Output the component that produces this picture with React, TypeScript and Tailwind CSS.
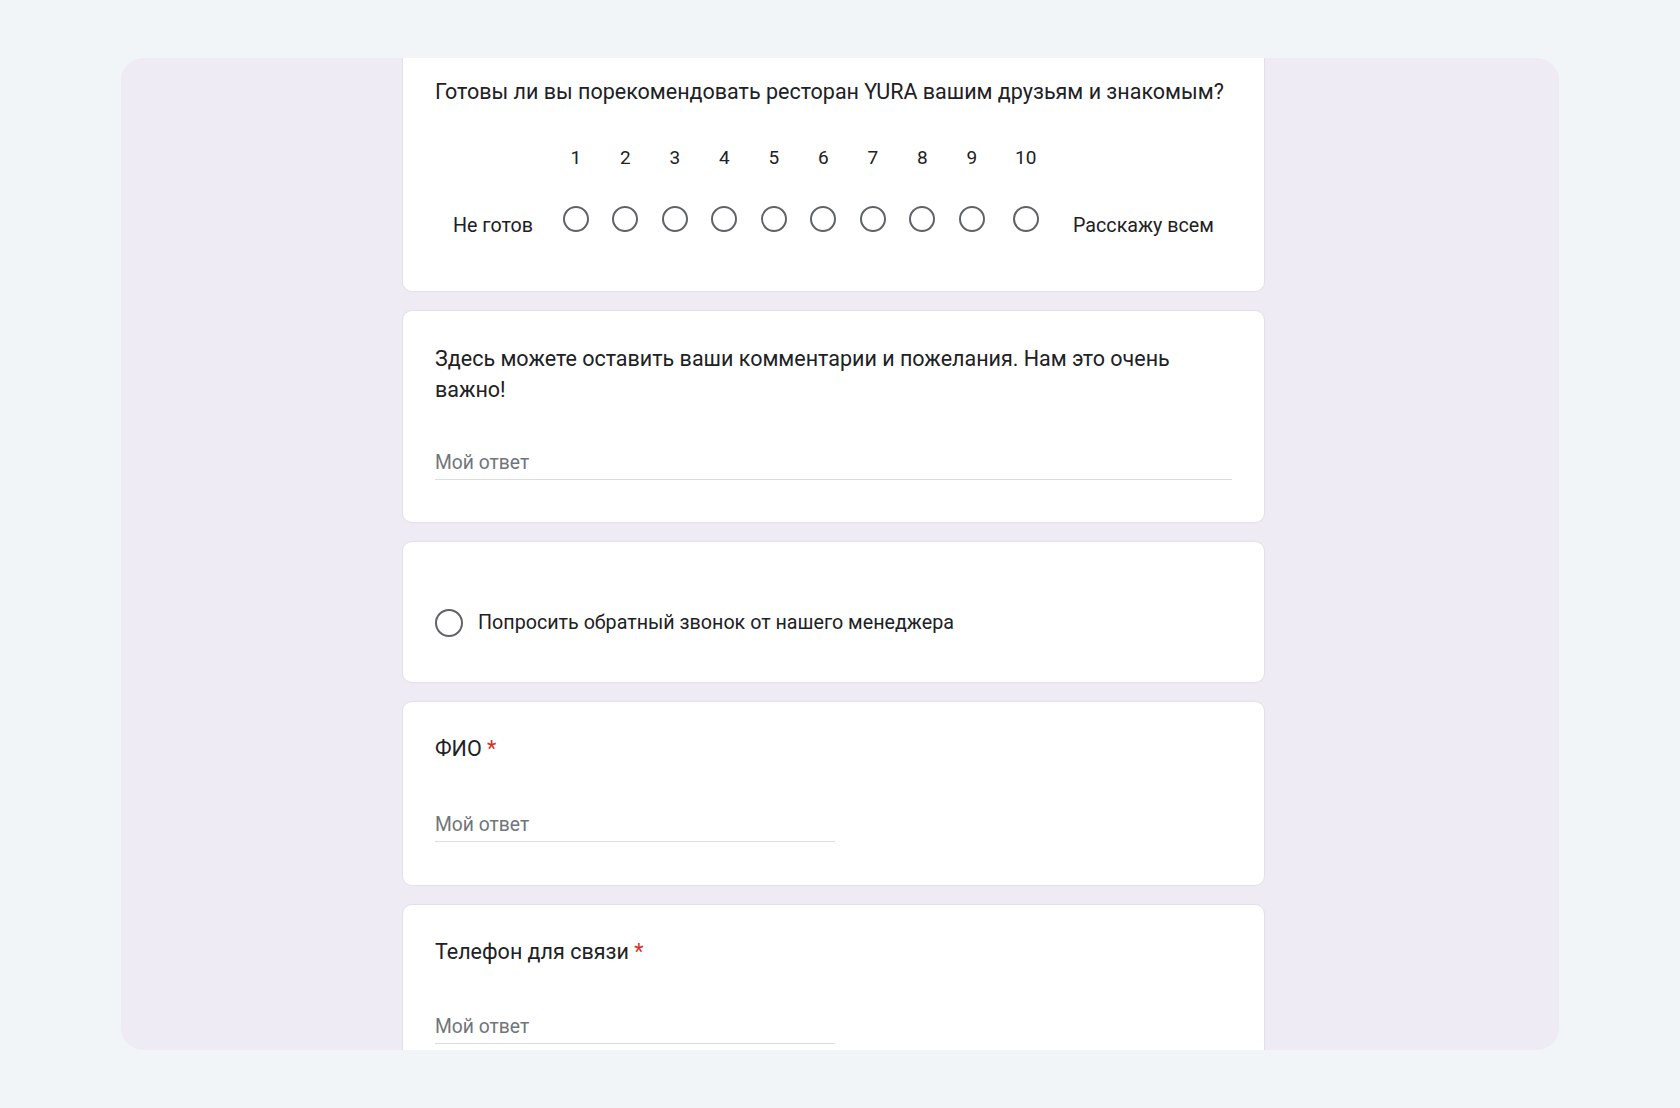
import React from "react";

const scale = [1, 2, 3, 4, 5, 6, 7, 8, 9, 10];

function Radio({ size = 26 }: { size?: number }) {
  return (
    <span
      className={`block rounded-full border-2 border-[#5f6368] ${
        size === 26 ? "w-[26px] h-[26px]" : "w-[28px] h-[28px]"
      }`}
    />
  );
}

function Card({ children, className = "" }: { children: React.ReactNode; className?: string }) {
  return (
    <div className={`bg-white rounded-[10px] border border-[#e2e0ea] px-[32px] ${className}`}>
      {children}
    </div>
  );
}

function Answer({ wide }: { wide?: boolean }) {
  return (
    <div className={`${wide ? "w-full" : "w-[400px]"} border-b border-[#dadce0] pb-[4px]`}>
      <span className="block leading-[24px] text-[19.3px] text-[#70757a]">Мой ответ</span>
    </div>
  );
}

export default function App() {
  return (
    <div className="h-screen bg-[#f2f5f8] pt-[58px] px-[121px] font-['Roboto','Liberation_Sans',sans-serif] text-[#202124]">
      <div className="h-[992px] rounded-[22px] bg-[#eeebf5] overflow-hidden flex">
        <div className="w-[863px] ml-[281px] -mt-[28px] flex flex-col gap-[18px]">
          {/* Linear scale question */}
          <Card className="pt-[46px] pb-[53px]">
            <p className="text-[21.5px] leading-[30px]">
              Готовы ли вы порекомендовать ресторан YURA вашим друзьям и знакомым?
            </p>
            <div className="flex items-start mt-[39px]">
              <div className="w-[116px] pt-[68px] text-center text-[19.7px] leading-[24px]">Не готов</div>
              {scale.map((n) => (
                <div
                  key={n}
                  className={`flex flex-col items-center ${n === 10 ? "w-[58.5px]" : "w-[49.5px]"}`}
                >
                  <span className="text-[19px] leading-[24px]">{n}</span>
                  <div className="mt-[36px]">
                    <Radio />
                  </div>
                </div>
              ))}
              <div className="pl-[18px] pt-[68px] text-[19.7px] leading-[24px]">Расскажу всем</div>
            </div>
          </Card>

          {/* Comments */}
          <Card className="pt-[32px] pb-[42px]">
            <p className="text-[21.5px] leading-[31px]">
              Здесь можете оставить ваши комментарии и пожелания. Нам это очень
              <br />
              важно!
            </p>
            <div className="mt-[46px]">
              <Answer wide />
            </div>
          </Card>

          {/* Callback */}
          <Card className="pt-[67px] pb-[45px]">
            <label className="flex items-center gap-[15px]">
              <Radio size={28} />
              <span className="text-[19.7px] leading-[24px]">
                Попросить обратный звонок от нашего менеджера
              </span>
            </label>
          </Card>

          {/* Name */}
          <Card className="pt-[32px] pb-[43px]">
            <p className="text-[21.5px] leading-[30px]">
              ФИО <span className="text-[#d93025]">*</span>
            </p>
            <div className="mt-[49px]">
              <Answer />
            </div>
          </Card>

          {/* Phone */}
          <Card className="pt-[32px] pb-[43px]">
            <p className="text-[21.5px] leading-[30px]">
              Телефон для связи <span className="text-[#d93025]">*</span>
            </p>
            <div className="mt-[48px]">
              <Answer />
            </div>
          </Card>
        </div>
      </div>
    </div>
  );
}
